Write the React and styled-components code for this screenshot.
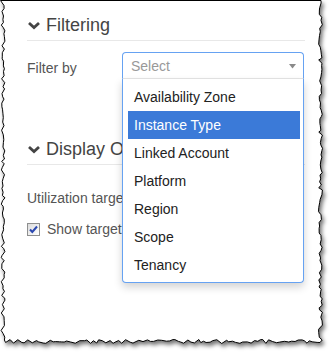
import React, { useMemo } from "react";
import styled, { createGlobalStyle } from "styled-components";

const GlobalStyle = createGlobalStyle`
  body {
    margin: 0;
    background: #fff;
    font-family: "Liberation Sans", Arial, sans-serif;
  }
`;

const items = [
  "Availability Zone",
  "Instance Type",
  "Linked Account",
  "Platform",
  "Region",
  "Scope",
  "Tenancy",
];

// torn paper edge, same every render
const tornPath = () => {
  let seed = 11;
  const rnd = () => {
    seed = (seed * 9301 + 49297) % 233280;
    return seed / 233280;
  };
  const pts = [[0.5, 0.5], [321, 0.5]];
  for (let y = 3; y < 341; y += 2 + rnd() * 3) pts.push([318.5 + rnd() * 4, y]);
  for (let x = 320; x > 5; x -= 2 + rnd() * 3) pts.push([x, 339.5 + rnd() * 4]);
  for (let y = 340; y > 2; y -= 2 + rnd() * 3) pts.push([1 + rnd() * 4, y]);
  return "M" + pts.map((p) => p[0].toFixed(1) + "," + p[1].toFixed(1)).join("L") + "Z";
};

const App = () => {
  const d = useMemo(tornPath, []);
  return (
    <>
      <GlobalStyle />
      <Page>
        <Paper width="335" height="360" viewBox="0 0 335 360">
          <path d={d} fill="#fff" stroke="#000" strokeWidth="1" />
        </Paper>
        <Content>
          <Section $gap={55}>
            <Header>
              <Chevron />
              <Title>Filtering</Title>
            </Header>
            <FilterRow>
              <Label>Filter by</Label>
              <SelectWrap>
                <Control>
                  <Placeholder>Select</Placeholder>
                  <Caret width="7" height="5" viewBox="0 0 7 5">
                    <path d="M0 0H7L3.5 4.5Z" fill="#8a8a8a" />
                  </Caret>
                </Control>
                <Menu>
                  {items.map((item) => (
                    <Item key={item} $active={item === "Instance Type"}>
                      {item}
                    </Item>
                  ))}
                </Menu>
              </SelectWrap>
            </FilterRow>
          </Section>
          <Section $gap={0}>
            <Header>
              <Chevron />
              <Title>Display Options</Title>
            </Header>
            <Text $top={25}>Utilization target</Text>
            <CheckRow>
              <Box>
                <svg width="11" height="11" viewBox="0 0 11 11">
                  <path
                    d="M2 5.5L4.3 8L9 2.5"
                    fill="none"
                    stroke="#2b48b0"
                    strokeWidth="2"
                  />
                </svg>
              </Box>
              <Text $top={0}>Show target line</Text>
            </CheckRow>
          </Section>
        </Content>
      </Page>
    </>
  );
};

const Chevron = () => (
  <ChevronSvg width="14" height="9" viewBox="0 0 14 9">
    <path d="M2 2L7 6.5L12 2" fill="none" stroke="#444" strokeWidth="2.8" />
  </ChevronSvg>
);

const Page = styled.div`
  position: relative;
  width: 335px;
  height: 360px;
  overflow: hidden;
  background: #fff;
`;

const Paper = styled.svg`
  position: absolute;
  left: 0;
  top: 0;
  filter: drop-shadow(2px 3px 2px rgba(0, 0, 0, 0.55));
`;

const Content = styled.div`
  position: relative;
  padding: 10px 30px 0 27px;
`;

const Section = styled.div`
  padding-bottom: ${(p) => p.$gap}px;
`;

const Header = styled.div`
  display: flex;
  align-items: center;
  height: 30px;
  border-bottom: 1px solid #e8e8e8;
`;

const ChevronSvg = styled.svg`
  flex: none;
  margin: 1px 5px 0 0;
`;

const Title = styled.span`
  white-space: nowrap;
  font-size: 18px;
  color: #444;
`;

const FilterRow = styled.div`
  display: flex;
  margin-top: 11px;
`;

const Label = styled.div`
  width: 95px;
  padding-top: 8px;
  font-size: 14px;
  color: #555;
`;

const SelectWrap = styled.div`
  position: relative;
  flex: 1;
  margin-right: 1px;
`;

const Control = styled.div`
  display: flex;
  align-items: center;
  justify-content: space-between;
  height: 25px;
  padding: 0 7px 0 8px;
  border: 1px solid #66a2f2;
  border-bottom: 1px solid #e6e6e6;
  border-radius: 4px 4px 0 0;
`;

const Placeholder = styled.span`
  font-size: 14px;
  color: #999;
`;

const Caret = styled.svg`
  margin-top: 1px;
`;

const Menu = styled.div`
  position: absolute;
  top: 100%;
  left: 0;
  right: 0;
  z-index: 2;
  padding: 4px 3px 3px 5px;
  background: #fff;
  border: 1px solid #66a2f2;
  border-top: none;
  border-radius: 0 0 4px 4px;
  box-shadow: 0 4px 8px rgba(0, 0, 0, 0.18);
`;

const Item = styled.div`
  height: 28px;
  line-height: 28px;
  padding-left: 6px;
  font-size: 14px;
  color: ${(p) => (p.$active ? "#fff" : "#222")};
  background: ${(p) => (p.$active ? "#3b7ad8" : "transparent")};
`;

const Text = styled.div`
  margin-top: ${(p) => p.$top}px;
  font-size: 14px;
  line-height: 16px;
  color: #555;
  white-space: nowrap;
`;

const CheckRow = styled.div`
  display: flex;
  align-items: center;
  gap: 7px;
  margin-top: 15px;
`;

const Box = styled.span`
  display: flex;
  flex: none;
  align-items: center;
  justify-content: center;
  width: 11px;
  height: 11px;
  border: 1px solid #8e8f8f;
  background: linear-gradient(135deg, #dcdcdc, #fff);
`;

export default App;
